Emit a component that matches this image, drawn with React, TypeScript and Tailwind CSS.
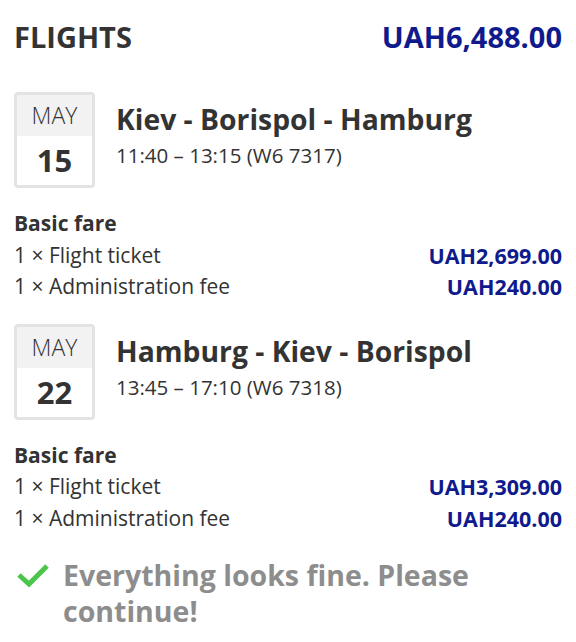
const legs = [
  {
    month: "MAY",
    day: "15",
    route: "Kiev - Borispol - Hamburg",
    time: "11:40 – 13:15 (W6 7317)",
    items: [
      { label: "1 × Flight ticket", price: "UAH2,699.00" },
      { label: "1 × Administration fee", price: "UAH240.00" },
    ],
  },
  {
    month: "MAY",
    day: "22",
    route: "Hamburg - Kiev - Borispol",
    time: "13:45 – 17:10 (W6 7318)",
    items: [
      { label: "1 × Flight ticket", price: "UAH3,309.00" },
      { label: "1 × Administration fee", price: "UAH240.00" },
    ],
  },
];

const App = () => {
  return (
    <div className="w-[576px] min-h-[642px] bg-white px-[14px] pt-[17px] text-[#333] font-['Open_Sans','Noto_Sans',sans-serif]">
      {/* Header */}
      <div className="flex items-baseline justify-between h-[40px] leading-[40px]">
        <h1 className="text-[29px] font-bold">FLIGHTS</h1>
        <div className="text-[29px] font-bold text-[#0f1a8c]">UAH6,488.00</div>
      </div>

      {legs.map((leg, i) => (
        <div key={leg.day} className={i === 0 ? "mt-[35px]" : "mt-[21px]"}>
          {/* Flight */}
          <div className="flex items-start">
            <div className="w-[81px] h-[96px] shrink-0 border-[3px] border-[#e3e3e3] rounded-[4px] overflow-hidden flex flex-col">
              <div className="h-[41px] bg-[#f2f2f2] flex items-center justify-center text-[23px] font-light leading-none">
                {leg.month}
              </div>
              <div className="flex-1 flex items-center justify-center text-[31px] font-bold leading-none">
                {leg.day}
              </div>
            </div>
            <div className="ml-[21px] pt-[9px]">
              <div className="text-[28.3px] font-bold leading-[36px]">{leg.route}</div>
              <div className="text-[20.5px] leading-[26px] mt-[5px]">{leg.time}</div>
            </div>
          </div>

          {/* Fare */}
          <div className="mt-[20px] text-[21px] leading-[31.5px]">
            <div className="font-bold">Basic fare</div>
            {leg.items.map((item) => (
              <div key={item.label} className="flex justify-between">
                <span>{item.label}</span>
                <span className="font-bold text-[21.5px] text-[#0f1a8c]">{item.price}</span>
              </div>
            ))}
          </div>
        </div>
      ))}

      {/* Status */}
      <div className="mt-[23px] flex items-start">
        <svg className="w-[32px] h-[25px] mt-[6px] ml-[3px] shrink-0" viewBox="0 0 32 25">
          <polyline points="2,12 12,21 30,3" fill="none" stroke="#4bc64b" strokeWidth={5} />
        </svg>
        <div className="ml-[14px] text-[28.5px] font-bold leading-[36px] text-[#8d8d8d]">
          Everything looks fine. Please
          <br />
          continue!
        </div>
      </div>
    </div>
  );
};

export default App;
